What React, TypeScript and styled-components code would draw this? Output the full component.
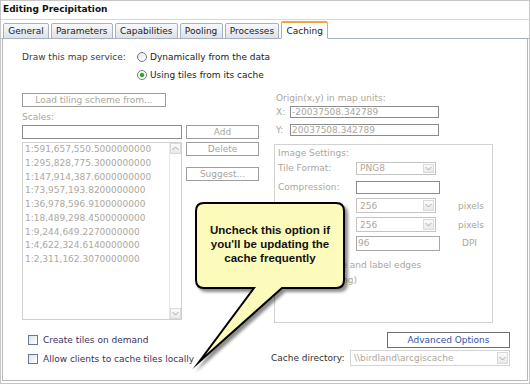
import React from 'react';
import styled, { createGlobalStyle } from 'styled-components';

const GlobalStyle = createGlobalStyle`
  html, body {
    margin: 0;
    padding: 0;
    background: #fff;
  }
  body {
    font-family: "DejaVu Sans", Verdana, sans-serif;
    font-size: 9px;
  }
  * {
    box-sizing: border-box;
  }
`;

const scales = [
  '1:591,657,550.5000000000',
  '1:295,828,775.3000000000',
  '1:147,914,387.6000000000',
  '1:73,957,193.8200000000',
  '1:36,978,596.9100000000',
  '1:18,489,298.4500000000',
  '1:9,244,649.2270000000',
  '1:4,622,324.6140000000',
  '1:2,311,162.3070000000',
];

const tabs = ['General', 'Parameters', 'Capabilities', 'Pooling', 'Processes', 'Caching'];

const Dialog = styled.div`
  position: relative;
  width: 530px;
  height: 384px;
  border: 1px solid #c6c6c6;
  display: flex;
  flex-direction: column;
  background: #fff;
  overflow: hidden;
`;

const TitleBar = styled.div`
  height: 19px;
  border-bottom: 1px solid #d8d8d8;
  padding-left: 2px;
  font-weight: bold;
  line-height: 17px;
  color: #111;
`;

const TabStrip = styled.div`
  height: 19px;
  display: flex;
  align-items: flex-end;
  gap: 2px;
  padding-left: 2px;
  border-bottom: 1px solid #a9b1bf;
`;

const Tab = styled.div<{ $active?: boolean }>`
  height: ${(p) => (p.$active ? 18 : 16)}px;
  margin-bottom: -1px;
  padding: 0 4.2px;
  display: flex;
  align-items: center;
  border: 1px solid #a9b1bf;
  border-top: ${(p) => (p.$active ? '2px solid #f2a53c' : '1px solid #a9b1bf')};
  border-bottom-color: ${(p) => (p.$active ? '#fff' : '#a9b1bf')};
  border-radius: 2px 2px 0 0;
  background: ${(p) => (p.$active ? '#fff' : 'linear-gradient(#f8f9fb, #dce1e9)')};
  color: #1c1c1c;
`;

const Panel = styled.div`
  flex: 1;
  margin: 0 1px 2px 1px;
  border: 1px solid #b8b8b8;
  border-top: none;
  padding: 9px 0 0 19px;
`;

const ServiceRow = styled.div`
  display: flex;
`;

const ServiceLabel = styled.div`
  width: 115px;
  height: 18px;
  line-height: 18px;
  color: #3a3a3a;
`;

const RadioGroup = styled.div`
  display: flex;
  flex-direction: column;
`;

const RadioOption = styled.div`
  height: 18px;
  display: flex;
  align-items: center;
  gap: 3px;
  color: #222;
`;

const Radio = styled.span<{ $checked?: boolean }>`
  width: 10px;
  height: 10px;
  border-radius: 50%;
  border: 1px solid #6f7a86;
  background: ${(p) =>
    p.$checked
      ? 'radial-gradient(circle, #2fa52f 0 1.6px, #9fd89f 2.2px, #fff 2.8px)'
      : 'linear-gradient(135deg, #e2e5ea, #fff)'};
`;

const Columns = styled.div`
  display: flex;
  gap: 13px;
`;

const LeftCol = styled.div`
  width: 236px;
  display: flex;
  flex-direction: column;
`;

const RightCol = styled.div`
  width: 239px;
  display: flex;
  flex-direction: column;
`;

const Button = styled.button<{ $w: number; $h?: number; $link?: boolean }>`
  width: ${(p) => p.$w}px;
  height: ${(p) => p.$h ?? 14}px;
  margin: 0;
  padding: 0;
  border: 1px solid ${(p) => (p.$link ? '#6e6e6e' : '#9e9e9e')};
  background: #fff;
  font-family: inherit;
  font-size: 9px;
  color: ${(p) => (p.$link ? '#3452a6' : '#aaa69c')};
  flex-shrink: 0;
`;

const GrayLabel = styled.div<{ $top?: number }>`
  margin-top: ${(p) => p.$top ?? 0}px;
  height: 12px;
  line-height: 12px;
  color: #aaa69c;
`;

const Row = styled.div<{ $top?: number; $gap?: number }>`
  display: flex;
  align-items: flex-start;
  margin-top: ${(p) => p.$top ?? 0}px;
  gap: ${(p) => p.$gap ?? 4}px;
`;

const TextBox = styled.input<{ $w: number; $h: number; $light?: boolean }>`
  width: ${(p) => p.$w}px;
  height: ${(p) => p.$h}px;
  margin: 0;
  padding: 0 1px;
  border: 1px solid ${(p) => (p.$light ? '#a8a8a8' : '#8c8c8c')};
  border-radius: 0;
  background: #fff;
  font-family: inherit;
  font-size: 9px;
  color: #aaa69c;
  outline: none;
  flex-shrink: 0;
`;

const ListBox = styled.div`
  width: 160px;
  height: 178px;
  border: 1px solid #d0d0d0;
  display: flex;
  flex-shrink: 0;
`;

const ListItems = styled.div`
  flex: 1;
  padding-left: 2px;
`;

const ListItem = styled.div`
  height: 13.75px;
  line-height: 13.75px;
  color: #aca89f;
  white-space: nowrap;
`;

const ScrollBar = styled.div`
  width: 12px;
  border-left: 1px solid #e8e8e8;
  display: flex;
  flex-direction: column;
  justify-content: space-between;
  align-items: flex-end;
`;

const ArrowBox = styled.span<{ $h?: number }>`
  width: 11px;
  height: ${(p) => p.$h ?? 11}px;
  display: flex;
  align-items: center;
  justify-content: center;
  border: 1px solid #dadada;
  background: linear-gradient(#fbfbfb, #e9e9e9);
`;

const SideButtons = styled.div`
  display: flex;
  flex-direction: column;
  gap: 11px;
`;

const CheckRows = styled.div`
  margin-top: 12px;
  padding-left: 6px;
  display: flex;
  flex-direction: column;
  gap: 3px;
`;

const CheckOption = styled.div<{ $muted?: boolean }>`
  height: 16px;
  display: flex;
  align-items: center;
  gap: 5px;
  color: ${(p) => (p.$muted ? '#aaa69c' : '#3b3163')};
`;

const CheckBox = styled.span`
  width: 10px;
  height: 10px;
  border: 1px solid #687a90;
  background: linear-gradient(135deg, #dde2e8, #fff);
  flex-shrink: 0;
`;

const OriginBlock = styled.div`
  padding-left: 5px;
  display: flex;
  flex-direction: column;
`;

const AxisRow = styled.div<{ $top: number }>`
  display: flex;
  align-items: center;
  margin-top: ${(p) => p.$top}px;
  color: #aaa69c;
`;

const AxisLabel = styled.span`
  width: 14px;
`;

const SettingsBox = styled.div`
  margin: 8px 0 0 3px;
  width: 219px;
  height: 179px;
  border: 1px solid #d2d2d2;
  padding: 2px 0 0 3px;
  display: flex;
  flex-direction: column;
`;

const FormRow = styled.div`
  height: 18.75px;
  display: flex;
  align-items: center;
  color: #aaa69c;
`;

const FormLabel = styled.span`
  width: 78px;
  flex-shrink: 0;
`;

const Unit = styled.span`
  margin-left: 22px;
`;

const Select = styled.div<{ $w: number; $h: number; $light?: boolean }>`
  width: ${(p) => p.$w}px;
  height: ${(p) => p.$h}px;
  border: 1px solid ${(p) => (p.$light ? '#d4d4d4' : '#c4c4c4')};
  display: flex;
  align-items: center;
  padding: 1px 1px 1px 3px;
  color: #aca89f;
  flex-shrink: 0;
`;

const SelectText = styled.span`
  flex: 1;
  white-space: nowrap;
  overflow: hidden;
`;

const AntialiasBlock = styled.div`
  margin-top: 4px;
  color: #aaa69c;
`;

const Indented = styled.div`
  padding-left: 20px;
  height: 14px;
  line-height: 14px;
`;

const BottomRight = styled.div`
  display: flex;
  flex-direction: column;
  align-items: flex-end;
  margin-top: 9px;
`;

const CacheRow = styled.div`
  width: 100%;
  margin-top: 2px;
  display: flex;
  align-items: center;
  color: #333;
`;

const CacheLabel = styled.span`
  width: 79px;
`;

const CalloutShape = styled.svg`
  position: absolute;
  left: 190px;
  top: 198px;
  overflow: visible;
`;

const CalloutText = styled.div`
  position: absolute;
  left: 195px;
  top: 202px;
  width: 148px;
  height: 85px;
  padding-bottom: 3px;
  display: flex;
  align-items: center;
  justify-content: center;
  text-align: center;
  font-family: "Liberation Sans", Arial, sans-serif;
  font-weight: bold;
  font-size: 11.5px;
  line-height: 14px;
  color: #111;
`;

const Chevron = ({ up }: { up?: boolean }) => (
  <svg width="7" height="5" viewBox="0 0 7 5">
    <polyline
      points={up ? '0.5,4 3.5,1 6.5,4' : '0.5,1 3.5,4 6.5,1'}
      fill="none"
      stroke="#a9a9a9"
      strokeWidth="1"
    />
  </svg>
);

const DropDown = ({ w, h, value, light }: { w: number; h: number; value: string; light?: boolean }) => (
  <Select $w={w} $h={h} $light={light}>
    <SelectText>{value}</SelectText>
    <ArrowBox $h={h - 4}>
      <Chevron />
    </ArrowBox>
  </Select>
);

const App: React.FC = () => {
  return (
    <>
      <GlobalStyle />
      <Dialog>
        <TitleBar>Editing Precipitation</TitleBar>
        <TabStrip>
          {tabs.map((t) => (
            <Tab key={t} $active={t === 'Caching'}>
              {t}
            </Tab>
          ))}
        </TabStrip>
        <Panel>
          <ServiceRow>
            <ServiceLabel>Draw this map service:</ServiceLabel>
            <RadioGroup>
              <RadioOption>
                <Radio />
                Dynamically from the data
              </RadioOption>
              <RadioOption>
                <Radio $checked />
                Using tiles from its cache
              </RadioOption>
            </RadioGroup>
          </ServiceRow>

          <Columns>
            <LeftCol>
              <Row $top={9}>
                <Button $w={144}>Load tiling scheme from...</Button>
              </Row>
              <GrayLabel $top={4}>Scales:</GrayLabel>
              <Row $top={2}>
                <TextBox $w={160} $h={14} readOnly value="" />
                <Button $w={73}>Add</Button>
              </Row>
              <Row $top={3}>
                <ListBox>
                  <ListItems>
                    {scales.map((s) => (
                      <ListItem key={s}>{s}</ListItem>
                    ))}
                  </ListItems>
                  <ScrollBar>
                    <ArrowBox>
                      <Chevron up />
                    </ArrowBox>
                    <ArrowBox>
                      <Chevron />
                    </ArrowBox>
                  </ScrollBar>
                </ListBox>
                <SideButtons>
                  <Button $w={73}>Delete</Button>
                  <Button $w={73}>Suggest...</Button>
                </SideButtons>
              </Row>
              <CheckRows>
                <CheckOption>
                  <CheckBox />
                  Create tiles on demand
                </CheckOption>
                <CheckOption>
                  <CheckBox />
                  Allow clients to cache tiles locally
                </CheckOption>
              </CheckRows>
            </LeftCol>

            <RightCol>
              <OriginBlock>
                <GrayLabel $top={8}>Origin(x,y) in map units:</GrayLabel>
                <AxisRow $top={2}>
                  <AxisLabel>X:</AxisLabel>
                  <TextBox $w={149} $h={12} readOnly value="-20037508.342789" />
                </AxisRow>
                <AxisRow $top={6}>
                  <AxisLabel>Y:</AxisLabel>
                  <TextBox $w={149} $h={12} readOnly value="20037508.342789" />
                </AxisRow>
              </OriginBlock>

              <SettingsBox>
                <GrayLabel>Image Settings:</GrayLabel>
                <FormRow>
                  <FormLabel>Tile Format:</FormLabel>
                  <DropDown w={80} h={13} value="PNG8" />
                </FormRow>
                <FormRow>
                  <FormLabel>Compression:</FormLabel>
                  <TextBox $w={84} $h={13} readOnly value="" />
                </FormRow>
                <FormRow>
                  <FormLabel>Tile Width:</FormLabel>
                  <DropDown w={80} h={15} value="256" />
                  <Unit>pixels</Unit>
                </FormRow>
                <FormRow>
                  <FormLabel>Tile Height:</FormLabel>
                  <DropDown w={80} h={15} value="256" />
                  <Unit>pixels</Unit>
                </FormRow>
                <FormRow>
                  <FormLabel>DPI:</FormLabel>
                  <TextBox $w={84} $h={15} $light readOnly value="96" />
                  <Unit>DPI</Unit>
                </FormRow>
                <AntialiasBlock>
                  <CheckOption $muted>
                    <CheckBox />
                    Smooth line and label edges
                  </CheckOption>
                  <Indented>(antialiasing)</Indented>
                </AntialiasBlock>
              </SettingsBox>

              <BottomRight>
                <Button $w={123} $h={16} $link>
                  Advanced Options
                </Button>
                <CacheRow>
                  <CacheLabel>Cache directory:</CacheLabel>
                  <DropDown w={160} h={16} light value={'\\\\birdland\\arcgiscache'} />
                </CacheRow>
              </BottomRight>
            </RightCol>
          </Columns>
        </Panel>

        <CalloutShape width="165" height="172" viewBox="0 0 165 172">
          <defs>
            <filter id="calloutShadow" x="-20%" y="-20%" width="140%" height="140%">
              <feDropShadow dx="3" dy="3" stdDeviation="1.8" floodColor="#000" floodOpacity="0.45" />
            </filter>
          </defs>
          <path
            d="M13,4 H145 Q153,4 153,12 V81 Q153,89 145,89 H91 L8,163 L63,89 H13 Q5,89 5,81 V12 Q5,4 13,4 Z"
            fill="#fdfbbb"
            stroke="#000"
            strokeWidth="2"
            strokeLinejoin="miter"
            strokeMiterlimit="30"
            filter="url(#calloutShadow)"
          />
        </CalloutShape>
        <CalloutText>
          Uncheck this option if
          <br />
          you'll be updating the
          <br />
          cache frequently
        </CalloutText>
      </Dialog>
    </>
  );
};

export default App;
